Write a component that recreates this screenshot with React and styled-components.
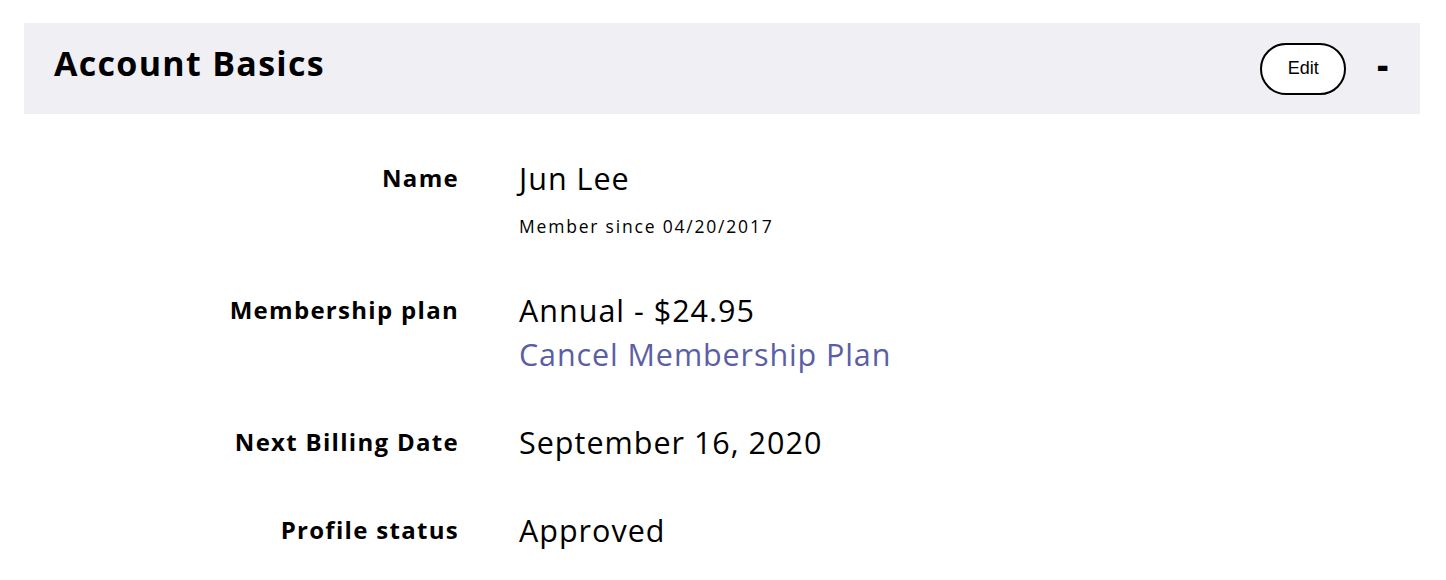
import React from 'react'
import styled, { createGlobalStyle } from 'styled-components'

const GlobalStyle = createGlobalStyle`
  body {
    margin: 0;
    background: #fff;
    font-family: 'Open Sans', 'Liberation Sans', sans-serif;
    color: #000;
  }
`

const rows = [
  { label: 'Name', value: 'Jun Lee', note: 'Member since 04/20/2017' },
  { label: 'Membership plan', value: 'Annual - $24.95', link: 'Cancel Membership Plan' },
  { label: 'Next Billing Date', value: 'September 16, 2020' },
  { label: 'Profile status', value: 'Approved' },
]

const App = () => {
  return (
    <>
      <GlobalStyle />
      <Container>
        <Header>
          <Title>Account Basics</Title>
          <Actions>
            <EditButton>Edit</EditButton>
            <Collapse>-</Collapse>
          </Actions>
        </Header>
        <Body>
          {rows.map((r) => (
            <Row key={r.label}>
              <Label>{r.label}</Label>
              <ValueCol>
                <Value>{r.value}</Value>
                {r.note && <Note>{r.note}</Note>}
                {r.link && <Link href="#">{r.link}</Link>}
              </ValueCol>
            </Row>
          ))}
        </Body>
      </Container>
    </>
  )
}

// ///// Style ////////
const Container = styled.div`
  padding: 23px 26px 0 24px;
`
const Header = styled.div`
  height: 91px;
  background-color: #efeff4;
  display: flex;
  align-items: center;
  justify-content: space-between;
  padding: 0 32px 0 30px;
`
const Title = styled.h1`
  margin: 0 0 11px;
  font-size: 34px;
  font-weight: 700;
  letter-spacing: 1.3px;
`
const Actions = styled.div`
  display: flex;
  align-items: center;
  gap: 31px;
`
const EditButton = styled.button`
  width: 86px;
  height: 52px;
  border: 2px solid #000;
  border-radius: 26px;
  background: #fff;
  font-family: 'Liberation Sans', Arial, sans-serif;
  font-size: 18px;
  color: #000;
  cursor: pointer;
`
const Collapse = styled.span`
  font-size: 34px;
  font-weight: 800;
  line-height: 1;
  margin-top: -10px;
`
const Body = styled.div`
  display: flex;
  flex-direction: column;
  padding-top: 44px;
`
const Row = styled.div`
  display: grid;
  grid-template-columns: 434px 1fr;
  column-gap: 61px;
  margin-bottom: 48px;
`
const Label = styled.div`
  text-align: right;
  font-size: 24px;
  font-weight: 700;
  line-height: 40px;
  letter-spacing: 1.3px;
  margin-right: -1px;
`
const ValueCol = styled.div`
  display: flex;
  flex-direction: column;
`
const Value = styled.div`
  font-size: 30.5px;
  line-height: 40px;
  letter-spacing: 1px;
`
const Note = styled.div`
  font-size: 17.5px;
  line-height: 24px;
  letter-spacing: 1.8px;
  margin: 16px 0 4px;
`
const Link = styled.a`
  font-size: 30.5px;
  line-height: 40px;
  letter-spacing: 0.9px;
  color: #5b5ea6;
  text-decoration: none;
  margin-top: 4px;
`

export default App
